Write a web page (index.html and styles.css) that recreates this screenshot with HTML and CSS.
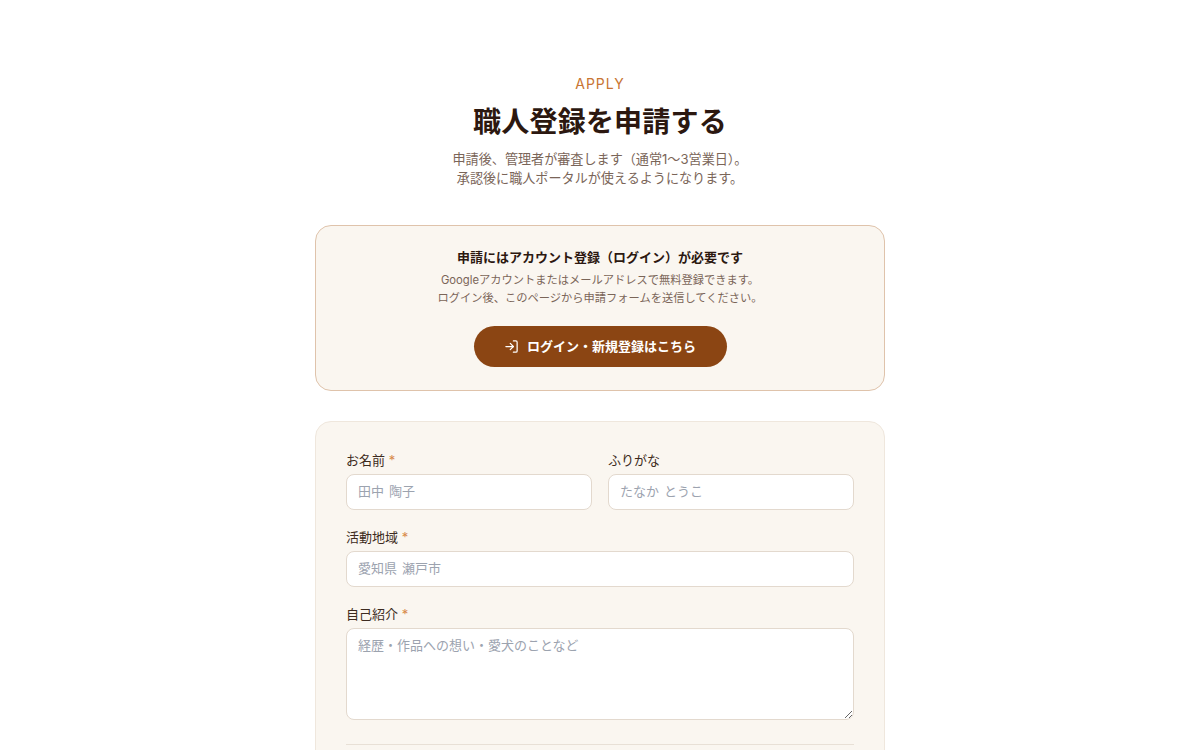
FILE: index.html
```html
<!DOCTYPE html>
<html lang="ja">
<head>
<meta charset="utf-8">
<title>職人登録を申請する</title>
<link rel="stylesheet" href="styles.css">
</head>
<body>
<main class="page">
  <header class="intro">
    <p class="eyebrow">APPLY</p>
    <h1 class="title">職人登録を申請する</h1>
    <p class="lead">申請後、管理者が審査します（通常1〜3営業日）。<br>承認後に職人ポータルが使えるようになります。</p>
  </header>
  <section class="notice">
    <h2 class="notice-title">申請にはアカウント登録（ログイン）が必要です</h2>
    <p class="notice-text">Googleアカウントまたはメールアドレスで無料登録できます。<br>ログイン後、このページから申請フォームを送信してください。</p>
    <a class="login-btn" href="#">
      <svg class="login-icon" viewBox="0 0 24 24" fill="none" stroke="currentColor" stroke-width="2" stroke-linecap="round" stroke-linejoin="round"><path d="M15 3h4a2 2 0 0 1 2 2v14a2 2 0 0 1-2 2h-4"/><path d="M10 17l5-5-5-5"/><path d="M15 12H3"/></svg>
      <span class="login-label">ログイン・新規登録はこちら</span>
    </a>
  </section>
  <form class="form">
    <div class="row">
      <div class="field">
        <label class="label">お名前 <span class="req">*</span></label>
        <input class="input" placeholder="田中 陶子">
      </div>
      <div class="field">
        <label class="label">ふりがな</label>
        <input class="input" placeholder="たなか とうこ">
      </div>
    </div>
    <div class="field">
      <label class="label">活動地域 <span class="req">*</span></label>
      <input class="input" placeholder="愛知県 瀬戸市">
    </div>
    <div class="field">
      <label class="label">自己紹介 <span class="req">*</span></label>
      <textarea class="input area" placeholder="経歴・作品への想い・愛犬のことなど"></textarea>
    </div>
    <hr class="divider">
  </form>
</main>
</body>
</html>
```
FILE: styles.css
```css
* { box-sizing: border-box; }
html, body { margin: 0; height: 750px; overflow: hidden; background: #fff; }
body { font-family: "Inter", "Noto Sans CJK JP", sans-serif; color: #2c1810; }
.page { width: 570px; margin: 0 auto; padding-top: 75px; }
.intro { text-align: center; margin-bottom: 37px; }
.eyebrow { margin: 0 0 8px; font-size: 14px; line-height: 18px; letter-spacing: 1px; color: #c87533; }
.title { margin: 0 0 7px; font-size: 28px; line-height: 42px; font-weight: 700; letter-spacing: 0.2px; color: #2c1810; }
.lead { margin: 0; font-size: 13.1px; line-height: 19px; color: #7a6558; }
.notice { background: #faf6f0; border: 1px solid #dfc3ab; border-radius: 16px; padding: 23px 24px; text-align: center; height: 166px; margin-bottom: 30px; }
.notice-title { margin: 0 0 5px; font-size: 13px; line-height: 17px; font-weight: 700; color: #2c1810; }
.notice-text { margin: 0 0 19px; font-size: 11.25px; line-height: 18px; color: #7a6558; }
.login-btn { display: inline-flex; align-items: center; justify-content: center; gap: 8px; width: 253px; height: 41px; border-radius: 21px; background: #8b4513; color: #fff; font-size: 13px; font-weight: 700; text-decoration: none; }
.login-label { padding-bottom: 2px; }
.login-icon { width: 15px; height: 15px; }
.form { background: #faf6f0; border: 1px solid #efe7dd; border-radius: 16px; padding: 30px 30px 0; height: 400px; }
.row { display: grid; grid-template-columns: 1fr 1fr; gap: 16px; }
.field { margin-bottom: 19px; }
.label { display: block; font-size: 13px; line-height: 16px; margin-bottom: 6px; color: #3d2b20; }
.req { color: #d8894a; }
.input { display: block; width: 100%; height: 36px; padding: 0 11px 2px; border: 1px solid #e3d9ce; border-radius: 8px; background: #fff; font: inherit; font-size: 13px; word-spacing: 1.3px; color: #2c1810; outline: none; }
.input::placeholder { color: #9ca3af; opacity: 1; }
.area { height: 92px; padding: 6px 11px; line-height: 20px; resize: vertical; }
.divider { border: 0; border-top: 1px solid #e8e0d6; margin: 24px 0 0; }
```
